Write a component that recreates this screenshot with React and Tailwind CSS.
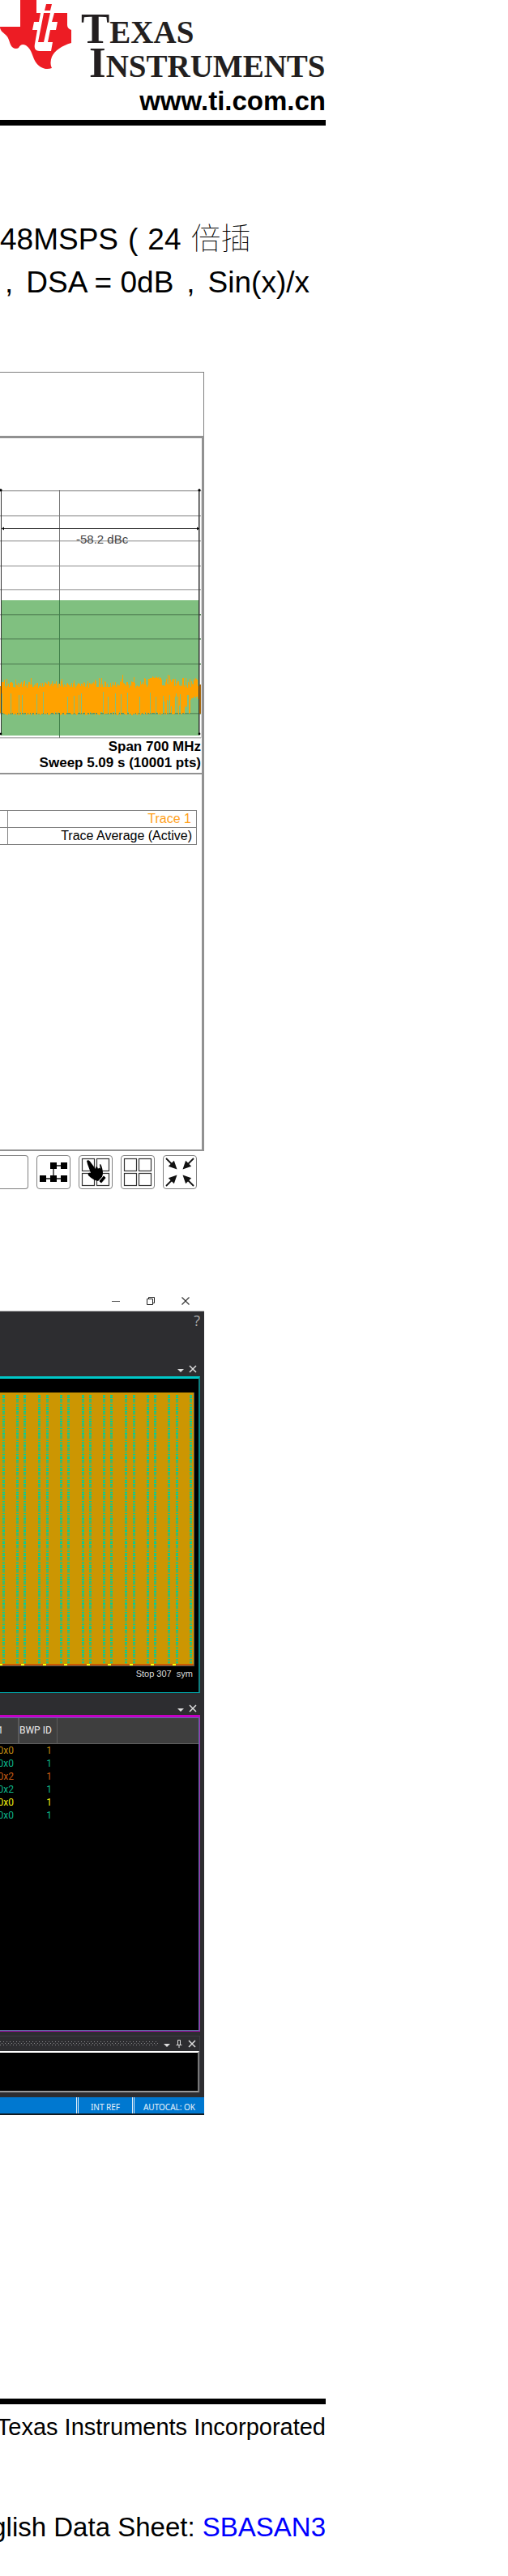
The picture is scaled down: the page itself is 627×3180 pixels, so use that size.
import React from "react";

/* ---------- Brand ---------- */

function TexasMark() {
  return (
    <svg viewBox="0 0 88 86" className="block h-[86px] w-[88px] shrink-0" aria-hidden="true">
      <path
        fill="#ed1c24"
        d="M25 0H45V16H83V31C83 34 85 36 88 37V53C77 56 67 63 64 70C62 75 62 80 64 84C56 87 49 83 45 78C40 72 40 61 32 56C28 54 25 55 23 59C20 61 15 60 13 55C11 50 11 47 7 43C3 39 0 38 0 33H25Z"
      />
      <path fill="#fff" d="M54 3H66L63 16H67L64 27H71L69 37H62L59 52H65L63 63H49C43 63 42 59 43 54L46 37H40L42 27H48L50 16H51Z" />
      <path fill="#ed1c24" d="M57 5H64L62 13H55ZM54 16H62L54 52H47Z" />
    </svg>
  );
}

function Header() {
  return (
    <header className="mr-[225px] border-b-[7px] border-black pb-[2px]">
      <div className="flex justify-end gap-3">
        <TexasMark />
        <div className="min-w-0 flex-1 whitespace-nowrap pt-[14px] font-['Liberation_Serif',serif] text-[53px] font-bold leading-[42px] text-[#231f20]">
          <div>
            T<span className="text-[39px] leading-[0px]">EXAS</span>
          </div>
          <div className="pl-[10px]">
            I<span className="text-[39px] leading-[0px]">NSTRUMENTS</span>
          </div>
        </div>
      </div>
      <div className="pt-[6px] text-right text-[33px] font-bold leading-[42px]">
        <a href="#home">www.ti.com.cn</a>
      </div>
    </header>
  );
}

/* ---------- Spectrum analyzer ---------- */

function makeTrace() {
  let seed = 17;
  const rnd = () => {
    seed = (seed * 1103515245 + 12345) % 2147483648;
    return seed / 2147483648;
  };
  let d = "";
  for (let x = 0; x < 246; x += 1) {
    const crest = x > 182 && x < 199;
    let top = 300 + Math.round(rnd() * 8);
    if (x > 198) top = 296 + Math.round(rnd() * 12);
    if (crest) top = 294 + Math.round(rnd() * 3);
    if (rnd() > 0.94) top -= 5;
    if (x === 151) top = 292;
    let bottom = 338 + Math.round(rnd() * 4);
    if (x > 200 && rnd() > 0.5) bottom = 314 + Math.round(rnd() * 20);
    if (rnd() > 0.9) bottom = 312 + Math.round(rnd() * 8);
    if (x > 236) bottom = 318 + Math.round(rnd() * 4);
    d += `M${x + 0.5} ${top}V${bottom}`;
  }
  return d;
}
const TRACE = makeTrace();
const GRID_ROWS = [64, 95, 126, 157, 186, 217, 247, 278, 308, 339, 369];

function SpectrumPlot() {
  return (
    <svg viewBox="0 0 249 371" className="block h-auto w-full" role="img" aria-label="Spectrum trace">
      {GRID_ROWS.map((y) => (
        <rect key={y} x="0" y={y} width="248" height="1.500" fill="#b4b4b4" />
      ))}
      <rect x="73" y="64" width="1" height="306" fill="#777" />
      <rect x="1" y="200" width="245" height="167" fill="#80c080" />
      {GRID_ROWS.slice(5, 10).map((y) => (
        <rect key={y} x="1" y={y} width="247" height="1.500" fill="#5c8f5e" />
      ))}
      <rect x="73" y="200" width="1" height="168" fill="#40804a" />
      <path d={TRACE} stroke="#ffa200" strokeWidth="1" fill="none" />
      <rect x="1" y="64" width="1" height="302" fill="#333" />
      <rect x="245" y="64" width="1.500" height="302" fill="#333" />
      <rect x="248" y="64" width="1" height="306" fill="#ddd" />
      <rect x="246" y="304" width="2" height="36" fill="#a86a10" />
      <path d="M3 111.500H245" stroke="#333" />
      <path d="M2 111.500l3-2v4zM246 111.500l-3-2v4z" />
      <circle cx="1" cy="64" r="1.600" />
      <circle cx="246" cy="64" r="1.600" />
      <circle cx="1" cy="365" r="1.400" />
      <circle cx="246" cy="365" r="1.400" />
      <text x="94" y="130" fontSize="15" fill="#444" fontFamily="Liberation Sans, sans-serif">
        -58.2 dBc
      </text>
    </svg>
  );
}

function ToolButton({ label, children }) {
  return (
    <button
      type="button"
      aria-label={label}
      className="h-[42px] w-[42px] shrink-0 rounded-[4px] border border-[#808080] bg-white"
    >
      <svg viewBox="0 0 40 40" className="block h-[40px] w-[40px]" aria-hidden="true">
        {children}
      </svg>
    </button>
  );
}

function FourPanes() {
  return (
    <g fill="#fff" stroke="#333" strokeWidth="1.200">
      <rect x="3.500" y="3.500" width="15" height="15" />
      <rect x="21.500" y="3.500" width="15" height="15" />
      <rect x="3.500" y="21.500" width="15" height="15" />
      <rect x="21.500" y="21.500" width="15" height="15" />
    </g>
  );
}

function InwardArrow({ angle }) {
  return (
    <g transform={`rotate(${angle} 20 20)`}>
      <path d="M3 3L12 12" stroke="#111" strokeWidth="1.800" />
      <path d="M16.500 16.500L5.800 12.800L12.800 5.800Z" fill="#111" />
    </g>
  );
}

function AnalyzerFigure() {
  return (
    <figure className="mr-[375px] mt-[84px]">
      <div className="h-[79px] border-r border-t border-[#808080]" />
      <div className="border-b-2 border-r-[3px] border-t-[3px] border-[#919191]">
        <SpectrumPlot />
        <div className="whitespace-nowrap pb-[2px] pr-px text-right text-[17px] font-bold leading-[20px]">
          <div>Span 700 MHz</div>
          <div>Sweep 5.09 s (10001 pts)</div>
        </div>
        <div className="min-h-[465px] border-t-2 border-[#919191] pr-[6px] pt-[44px]">
          <table className="w-full border-collapse text-[16px] leading-[20px]">
            <tbody>
              <tr>
                <td className="h-[20px] w-[9px] border border-l-0 border-[#808080] p-0" />
                <td className="border border-[#808080] py-0 pr-[6px] text-right text-[#ff9f1a]">Trace 1</td>
              </tr>
              <tr>
                <td className="h-[20px] border border-l-0 border-[#808080] p-0" />
                <td className="whitespace-nowrap border border-[#808080] py-0 pr-[5px] text-right">
                  Trace Average (Active)
                </td>
              </tr>
            </tbody>
          </table>
        </div>
      </div>
      <div className="mt-[5px] flex gap-[10px] pr-[9px]">
        <div className="h-[42px] flex-1 rounded-r-[4px] border border-l-0 border-[#808080]" />
        <ToolButton label="Block diagram">
          <path d="M20 12V28M20 12H33M7 28H33" stroke="#111" strokeWidth="1.300" />
          <path d="M16 8h8v8h-8zM29 8h8v8h-8zM3 24h8v8H3zM16 24h8v8h-8zM29 24h8v8h-8z" fill="#000" />
        </ToolButton>
        <ToolButton label="Touch layout">
          <FourPanes />
          <path
            d="M9 6C11 4 13 6 14 8L20 16C20 12 22 12 23 16C24 14 26 14 26 18C26 13 24 10 26 10C28 13 29 18 29 22L28 26L23 31C18 30 14 27 11 24C10 22 11 20 14 21L10 10Z"
            fill="#000"
          />
          <path d="M24 31L30 24L33 27L27 34Z" fill="#000" stroke="#fff" strokeWidth="0.800" />
        </ToolButton>
        <ToolButton label="Grid layout">
          <FourPanes />
        </ToolButton>
        <ToolButton label="Collapse">
          <InwardArrow angle={0} />
          <InwardArrow angle={90} />
          <InwardArrow angle={180} />
          <InwardArrow angle={270} />
        </ToolButton>
      </div>
    </figure>
  );
}

/* ---------- Demodulation software window ---------- */

function Caret() {
  return (
    <svg viewBox="0 0 8 10" className="block h-[10px] w-[8px]" aria-hidden="true">
      <path d="M0 5H8L4 9Z" fill="#ddd" />
    </svg>
  );
}

function Cross({ color }) {
  return (
    <svg viewBox="0 0 10 10" className="block h-[10px] w-[10px]" aria-hidden="true">
      <path d="M1 1L9 9M9 1L1 9" stroke={color} strokeWidth="1.500" />
    </svg>
  );
}

function PanelTools() {
  return (
    <div className="flex items-center justify-end gap-[6px] pr-[9px]">
      <button type="button" aria-label="Panel menu">
        <Caret />
      </button>
      <button type="button" aria-label="Close panel">
        <Cross color="#ddd" />
      </button>
    </div>
  );
}

const STRIPES = [3, 20, 29, 47, 57, 74, 83, 101, 110, 127, 136, 154, 164, 181, 190, 207, 217, 234];
const MARKERS = [-1, 26, 53, 79, 107, 133, 160, 186, 213];

function FramePlot() {
  return (
    <svg viewBox="0 0 240 338" className="block h-auto w-full" role="img" aria-label="Resource grid">
      <defs>
        <pattern id="symbols" width="3" height="15" patternUnits="userSpaceOnUse" y="3">
          <path d="M0 0h3v1H0zM0 2h3v2H0zM0 5h3v1H0zM0 11h3v1H0zM0 13h3v1H0z" fill="#00cf99" />
          <path d="M0 6h3v3H0z" fill="#4fb45f" />
          <path d="M0 1h3v1H0zM0 9h3v1H0z" fill="#8aa636" />
        </pattern>
      </defs>
      <rect width="240" height="338" fill="#555" />
      <rect width="239" height="337" fill="#cc9602" />
      {STRIPES.map((x) => (
        <rect key={x} x={x} y="3" width="3" height="334" fill="url(#symbols)" />
      ))}
      <rect y="335" width="239" height="2" fill="#cc5a00" />
      {MARKERS.map((x) => (
        <rect key={x} x={x} y="335" width="4" height="2" fill="#ff0" />
      ))}
    </svg>
  );
}

const ROWS = [
  { id: "a", dci: "0x0", bwp: "1", tone: "text-[#c08a10]" },
  { id: "b", dci: "0x0", bwp: "1", tone: "text-[#0db58a]" },
  { id: "c", dci: "0x2", bwp: "1", tone: "text-[#c85c14]" },
  { id: "d", dci: "0x2", bwp: "1", tone: "text-[#0db58a]" },
  { id: "e", dci: "0x0", bwp: "1", tone: "text-[#f0ee10]" },
  { id: "f", dci: "0x0", bwp: "1", tone: "text-[#0db58a]" },
];

function AllocationTable() {
  return (
    <table className="w-full table-fixed border-collapse font-[Roboto,sans-serif] text-[12px]">
      <colgroup>
        <col className="w-[23px]" />
        <col className="w-[47px]" />
        <col />
      </colgroup>
      <thead>
        <tr className="h-[31px] border-b border-[#606060] bg-[#3e3e3e] text-[#eee]">
          <th className="overflow-hidden border-r-2 border-[#5a5a5a] p-0 pr-[18px] text-right font-normal">
            <span className="flex justify-end">1</span>
          </th>
          <th className="whitespace-nowrap border-r border-[#5a5a5a] p-0 pr-[6px] text-right font-normal">BWP ID</th>
          <th className="p-0" />
        </tr>
      </thead>
      <tbody className="leading-[16px]">
        <tr className="h-[1px]" />
        {ROWS.map((row) => (
          <tr key={row.id} className={row.tone}>
            <td className="overflow-hidden p-0 pr-[6px]">
              <span className="flex justify-end">{row.dci}</span>
            </td>
            <td className="p-0 pr-[6px] text-right">{row.bwp}</td>
            <td className="p-0" />
          </tr>
        ))}
      </tbody>
    </table>
  );
}

function Grip() {
  return (
    <svg className="block h-[6px] min-w-0 flex-1" aria-hidden="true">
      <defs>
        <pattern id="grip" width="4" height="4" patternUnits="userSpaceOnUse">
          <rect width="1" height="1" fill="#8a8a8e" />
          <rect x="2" y="2" width="1" height="1" fill="#8a8a8e" />
        </pattern>
      </defs>
      <rect width="100%" height="6" fill="url(#grip)" />
    </svg>
  );
}

function SoftwareFigure() {
  return (
    <figure className="mr-[375px] mt-[126px]">
      <div className="flex h-[25px] items-center justify-end gap-[33px] border-b border-[#b0b0b0] pr-[18px]">
        <button type="button" aria-label="Minimize">
          <svg viewBox="0 0 10 10" className="block h-[10px] w-[10px]" aria-hidden="true">
            <path d="M0 5.500H10" stroke="#555" />
          </svg>
        </button>
        <button type="button" aria-label="Restore">
          <svg viewBox="0 0 10 10" className="block h-[10px] w-[10px]" aria-hidden="true">
            <path d="M.5 2.500H7.500V9.500H.5ZM2.500 2.500V.5H9.500V7.500H7.500" fill="none" stroke="#222" />
          </svg>
        </button>
        <button type="button" aria-label="Close">
          <svg viewBox="0 0 10 10" className="block h-[10px] w-[10px]" aria-hidden="true">
            <path d="M.5 .5L9.500 9.500M9.500 .5L.5 9.500" stroke="#333" strokeWidth="1.200" />
          </svg>
        </button>
      </div>

      <div className="bg-[#2d2d30]">
        <div className="flex h-[66px] justify-end pr-[5px] pt-[3px]">
          <button type="button" className="h-[16px] font-['Open_Sans',sans-serif] text-[18px] leading-[16px] text-[#aaa]">
            ?
          </button>
        </div>
        <PanelTools />
        <div className="mr-[5px] mt-[4px] border-b border-r-2 border-t-[3px] border-b-[#00b4b8] border-r-[#0f7f80] border-t-[#00c8c8] bg-black pt-[17px]">
          <div className="pr-[5px]">
            <FramePlot />
          </div>
          <div className="h-[32px] whitespace-pre pr-[7px] pt-[2px] text-right text-[11px] leading-[14px] text-[#ddd]">
            {"Stop 307  sym"}
          </div>
        </div>

        <div className="pt-[14px]">
          <PanelTools />
        </div>
        <div className="mr-[5px] mt-[3px] border-b border-r border-t-[3px] border-[#c400c4] border-b-[#a010a8] border-r-[#a030b0]">
          <div className="min-h-[387px] border-b border-r border-t border-[#5a70a0] bg-black">
            <AllocationTable />
          </div>
        </div>

        <div className="mr-[5px] mt-[5px] border-r border-t border-[#3c3c42]">
          <div className="flex h-[18px] items-center gap-[7px] pr-[4px]">
            <Grip />
            <button type="button" aria-label="Panel menu">
              <Caret />
            </button>
            <button type="button" aria-label="Pin panel">
              <svg viewBox="0 0 8 10" className="block h-[10px] w-[8px]" aria-hidden="true">
                <path d="M2.500 .5H5.500V6M2.500 .5V6M.5 6.500H7.500M4 7V10" fill="none" stroke="#ddd" />
              </svg>
            </button>
            <button type="button" aria-label="Close panel">
              <Cross color="#ddd" />
            </button>
          </div>
          <div className="h-[51px] border-b-2 border-r-2 border-t-2 border-b-[#999] border-r-[#777] border-t-white bg-black" />
        </div>

        <div className="mt-[6px] flex h-[22px] justify-end whitespace-nowrap border-b-2 border-[#111a22] bg-[#0078d0] font-['Noto_Sans',sans-serif] text-[10px] leading-[24px] text-[#e8f2fa]">
          <div className="w-[69px] border-l-[3px] border-double border-[#e0eefa] text-center">INT REF</div>
          <div className="w-[89px] border-l-[3px] border-double border-[#e0eefa] text-center">AUTOCAL: OK</div>
        </div>
      </div>
    </figure>
  );
}

/* ---------- Page ---------- */

export default function App() {
  return (
    <main className="overflow-x-hidden bg-white pb-[34px] font-['Liberation_Sans','Noto_Sans_CJK_SC',sans-serif] text-black">
      <Header />
      <div className="mt-[114px] whitespace-nowrap text-[37px] leading-[53px]">
        <p>
          48MSPS<span className="px-3">(</span>24<span className="pl-3 font-thin">倍插</span>
        </p>
        <p className="pl-[6px]">
          ,<span className="px-4">DSA = 0dB</span>,<span className="pl-4">Sin(x)/x</span>
        </p>
      </div>
      <AnalyzerFigure />
      <SoftwareFigure />
      <footer className="mr-[225px] mt-[350px] border-t-[7px] border-black pt-[11px]">
        <div className="flex justify-end whitespace-nowrap text-[29px] leading-[34px]">
          Texas Instruments Incorporated
        </div>
        <div className="mt-[86px] flex justify-end whitespace-pre text-[33px] leading-[42px]">
          {"English Data Sheet: "}
          <a href="#sbasan3" className="text-[#0000ff]">
            SBASAN3
          </a>
        </div>
      </footer>
    </main>
  );
}
